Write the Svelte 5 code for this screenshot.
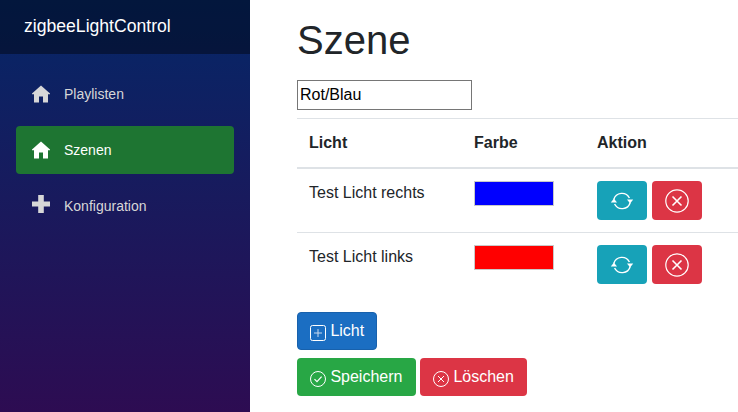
<script>
    const navItems = [
        { label: "Playlisten", icon: "home" },
        { label: "Szenen", icon: "home", active: true },
        { label: "Konfiguration", icon: "plus" },
    ];
    const lights = [
        { name: "Test Licht rechts", color: "#0000ff" },
        { name: "Test Licht links", color: "#ff0000" },
    ];
</script>

<div class="layout">
    <aside class="sidebar">
        <div class="brand">zigbeeLightControl</div>
        <nav>
            {#each navItems as item}
                <a href="#top" class="nav-item" class:active={item.active}>
                    {#if item.icon === "home"}
                        <svg class="nav-icon" viewBox="0 0 18 18" aria-hidden="true">
                            <path d="M9 0.5 L18 8.6 V9.2 H16 V17.5 H11 V11.5 H7 V17.5 H2 V9.2 H0 V8.6 Z" />
                        </svg>
                    {:else}
                        <svg class="nav-icon raised" viewBox="0 0 18 18" aria-hidden="true">
                            <path d="M6.2 0 H11.8 V6.4 H18 V11.6 H11.8 V18 H6.2 V11.6 H0 V6.4 H6.2 Z" />
                        </svg>
                    {/if}
                    <span>{item.label}</span>
                </a>
            {/each}
        </nav>
    </aside>

    <main>
        <h1>Szene</h1>
        <input class="name" type="text" value="Rot/Blau" />
        <table>
            <thead>
                <tr>
                    <th class="col-light">Licht</th>
                    <th class="col-color">Farbe</th>
                    <th>Aktion</th>
                </tr>
            </thead>
            <tbody>
                {#each lights as light}
                    <tr>
                        <td>{light.name}</td>
                        <td><input class="color" type="color" value={light.color} /></td>
                        <td>
                            <div class="actions">
                                <button class="btn info square" aria-label="Aktualisieren">
                                    <svg viewBox="0 0 24 24" width="24" height="24" fill="none" stroke="#fff" stroke-width="1.4">
                                        <path d="M3.8 10.5 A8.4 8.4 0 0 1 19.4 9" />
                                        <path d="M20.2 13.5 A8.4 8.4 0 0 1 4.6 15" />
                                        <path d="M0.8 13.6 H7 L3.9 9.6 Z" fill="#fff" stroke="none" />
                                        <path d="M17 10.4 H23.2 L20.1 14.4 Z" fill="#fff" stroke="none" />
                                    </svg>
                                </button>
                                <button class="btn danger square" aria-label="Entfernen">
                                    <svg viewBox="0 0 24 24" width="24" height="24" fill="none" stroke="#fff" stroke-width="1.2">
                                        <circle cx="12" cy="12" r="11.2" />
                                        <path d="M7.5 7.5 L16.5 16.5 M16.5 7.5 L7.5 16.5" stroke-width="1.6" />
                                    </svg>
                                </button>
                            </div>
                        </td>
                    </tr>
                {/each}
            </tbody>
        </table>

        <div class="btn-row first">
            <button class="btn primary">
                <svg class="btn-icon" viewBox="0 0 16 16" width="16" height="16" fill="none" stroke="#fff">
                    <rect x="0.5" y="0.5" width="15" height="15" rx="2" />
                    <path d="M8 4 V12 M4 8 H12" stroke="#c9d9ee" />
                </svg>
                Licht
            </button>
        </div>
        <div class="btn-row">
            <button class="btn success">
                <svg class="btn-icon" viewBox="0 0 16 16" width="16" height="16" fill="none" stroke="#fff">
                    <circle cx="8" cy="8" r="7.5" />
                    <path d="M4.5 8.2 L7 10.7 L11.6 5.6" stroke-width="1.2" />
                </svg>
                Speichern
            </button>
            <button class="btn danger">
                <svg class="btn-icon" viewBox="0 0 16 16" width="16" height="16" fill="none" stroke="#fff">
                    <circle cx="8" cy="8" r="7.5" />
                    <path d="M5 5 L11 11 M11 5 L5 11" />
                </svg>
                Löschen
            </button>
        </div>
    </main>
</div>

<style>
    :global(body) {
        font-family: "Liberation Sans", Arial, sans-serif;
        font-size: 16px;
        line-height: 1.5;
        color: #212529;
        background: #fff;
        overflow: hidden;
    }
    .layout {
        display: flex;
        height: 412px;
        overflow: hidden;
    }
    .sidebar {
        width: 250px;
        flex: none;
        background: linear-gradient(180deg, #052767 0%, #2d0c52 100%);
    }
    .brand {
        height: 54px;
        box-sizing: border-box;
        padding: 0 24px;
        line-height: 53px;
        font-size: 17.6px;
        color: #fff;
        background: rgba(0, 0, 0, 0.4);
    }
    nav {
        display: flex;
        flex-direction: column;
        gap: 8px;
        padding: 16px 16px 0;
    }
    .nav-item {
        display: flex;
        align-items: center;
        height: 48px;
        padding-left: 16px;
        border-radius: 4px;
        font-size: 14px;
        line-height: 48px;
        color: #d7d7d7;
        text-decoration: none;
    }
    .nav-item.active {
        background: #1e7532;
        color: #fff;
    }
    .nav-icon {
        width: 18px;
        height: 18px;
        margin-right: 14px;
        fill: #d7d7d7;
    }
    .nav-icon.raised {
        margin-bottom: 4px;
    }
    .active .nav-icon {
        fill: #fff;
    }
    main {
        flex: 1;
        min-width: 0;
        padding: 16px 0 0 47px;
    }
    h1 {
        margin: 0 0 16px;
        font-size: 40px;
        font-weight: 400;
        line-height: 48px;
    }
    .name {
        display: block;
        box-sizing: border-box;
        width: 175px;
        height: 30px;
        padding: 1px 2px;
        border: 1px solid #767676;
        font-family: inherit;
        font-size: 16px;
        color: #000;
        background: #fff;
        border-radius: 0;
    }
    table {
        width: 441px;
        margin-top: 8px;
        border-collapse: collapse;
    }
    th {
        padding: 12px;
        height: 48px;
        box-sizing: border-box;
        text-align: left;
        font-weight: 700;
        vertical-align: bottom;
        border-top: 1px solid #dee2e6;
        border-bottom: 2px solid #dee2e6;
    }
    td {
        padding: 12px;
        vertical-align: top;
        border-bottom: 1px solid #dee2e6;
    }
    tbody tr:last-child td {
        border-bottom: 0;
    }
    .col-light {
        width: 165px;
    }
    .col-color {
        width: 123px;
    }
    .color {
        display: block;
        box-sizing: border-box;
        width: 80px;
        height: 25px;
        padding: 0;
        border: 1px solid #c9c9c9;
        background: none;
        appearance: none;
        -webkit-appearance: none;
    }
    .color::-webkit-color-swatch-wrapper {
        padding: 0;
    }
    .color::-webkit-color-swatch {
        border: 0;
        border-radius: 0;
    }
    .actions {
        display: flex;
        gap: 5px;
    }
    .btn {
        display: inline-flex;
        align-items: center;
        gap: 4.4px;
        box-sizing: border-box;
        height: 38px;
        padding: 0 12px;
        border: 1px solid transparent;
        border-radius: 4px;
        font-family: inherit;
        font-size: 16px;
        color: #fff;
    }
    .btn-icon {
        margin-top: 4px;
    }
    .btn.square {
        justify-content: center;
        width: 50px;
        height: 39px;
        padding: 0;
    }
    .info {
        background: #17a2b8;
    }
    .danger {
        background: #dc3545;
    }
    .primary {
        background: #1b6ec2;
        border-color: #1861ac;
    }
    .success {
        min-width: 119px;
        background: #28a745;
    }
    .btn-row {
        display: flex;
        gap: 4px;
        margin-top: 8px;
    }
    .btn-row.first {
        margin-top: 16px;
    }
</style>
